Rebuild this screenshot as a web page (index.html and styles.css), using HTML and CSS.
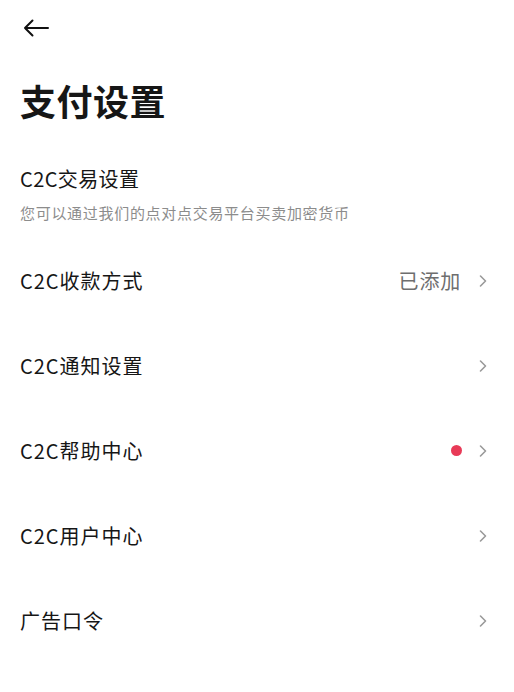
FILE: index.html
```html
<!DOCTYPE html>
<html lang="zh-CN">
<head>
<meta charset="utf-8">
<title>支付设置</title>
<link rel="stylesheet" href="styles.css">
</head>
<body>
<div class="page">
  <header class="topbar">
    <svg class="back" width="26" height="18" viewBox="0 0 26 18" aria-hidden="true">
      <path d="M25 9 H2 M9.5 1.5 L2 9 L9.5 16.5" fill="none" stroke="#111" stroke-width="2" stroke-linecap="round" stroke-linejoin="round"/>
    </svg>
  </header>
  <h1 class="title">支付设置</h1>
  <section class="section">
    <h2 class="section-title">C2C交易设置</h2>
    <p class="section-desc">您可以通过我们的点对点交易平台买卖加密货币</p>
  </section>
  <ul class="list">
    <li class="row">
      <span class="label">C2C收款方式</span>
      <span class="right"><span class="value">已添加</span><svg class="chev" width="8" height="12" viewBox="0 0 8 12"><path d="M1.5 1 L6.5 6 L1.5 11" fill="none" stroke="#9a9a9a" stroke-width="1.6" stroke-linecap="round" stroke-linejoin="round"/></svg></span>
    </li>
    <li class="row">
      <span class="label">C2C通知设置</span>
      <span class="right"><svg class="chev" width="8" height="12" viewBox="0 0 8 12"><path d="M1.5 1 L6.5 6 L1.5 11" fill="none" stroke="#9a9a9a" stroke-width="1.6" stroke-linecap="round" stroke-linejoin="round"/></svg></span>
    </li>
    <li class="row">
      <span class="label">C2C帮助中心</span>
      <span class="right"><span class="dot"></span><svg class="chev" width="8" height="12" viewBox="0 0 8 12"><path d="M1.5 1 L6.5 6 L1.5 11" fill="none" stroke="#9a9a9a" stroke-width="1.6" stroke-linecap="round" stroke-linejoin="round"/></svg></span>
    </li>
    <li class="row">
      <span class="label">C2C用户中心</span>
      <span class="right"><svg class="chev" width="8" height="12" viewBox="0 0 8 12"><path d="M1.5 1 L6.5 6 L1.5 11" fill="none" stroke="#9a9a9a" stroke-width="1.6" stroke-linecap="round" stroke-linejoin="round"/></svg></span>
    </li>
    <li class="row">
      <span class="label">广告口令</span>
      <span class="right"><svg class="chev" width="8" height="12" viewBox="0 0 8 12"><path d="M1.5 1 L6.5 6 L1.5 11" fill="none" stroke="#9a9a9a" stroke-width="1.6" stroke-linecap="round" stroke-linejoin="round"/></svg></span>
    </li>
  </ul>
</div>
</body>
</html>
```

FILE: styles.css
```css
* { box-sizing: border-box; }
html, body {
  margin: 0;
  padding: 0;
  background: #ffffff;
}
body {
  font-family: "Noto Sans CJK SC", "Noto Sans", sans-serif;
  color: #161616;
}
.page {
  padding: 0 20px;
}
.topbar {
  height: 56px;
  display: flex;
  align-items: center;
}
.back {
  display: block;
  margin-left: 3px;
}
.title {
  margin: 20px 0 0;
  font-size: 36px;
  line-height: 48px;
  font-weight: 700;
  letter-spacing: 0.5px;
}
.section {
  margin-top: 41px;
}
.section-title {
  margin: 0;
  font-size: 20px;
  line-height: 28px;
  font-weight: 400;
  letter-spacing: 0.4px;
}
.section-desc {
  margin: 10px 0 0;
  font-size: 15px;
  line-height: 20px;
  color: #8c8c8c;
  letter-spacing: 0.7px;
}
.list {
  list-style: none;
  margin: 15px 0 0;
  padding: 0;
}
.row {
  height: 85px;
  display: flex;
  align-items: center;
  justify-content: space-between;
}
.label {
  font-size: 20px;
  line-height: 28px;
  letter-spacing: 1px;
}
.right {
  display: flex;
  align-items: center;
  padding-right: 7px;
}
.value {
  font-size: 20px;
  line-height: 28px;
  color: #6e6e6e;
  letter-spacing: 0.8px;
  margin-right: 18px;
}
.dot {
  width: 11px;
  height: 11px;
  border-radius: 50%;
  background: #e83a57;
  margin-right: 17px;
}
.chev {
  display: block;
}
```
